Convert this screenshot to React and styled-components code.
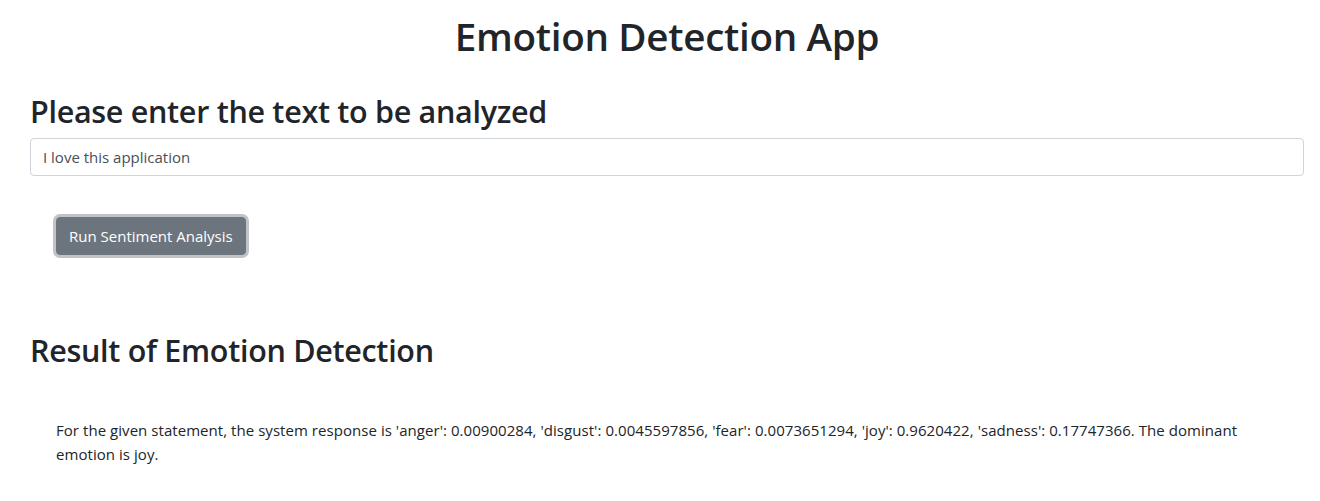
import React from "react";
import styled, { createGlobalStyle } from "styled-components";

const Global = createGlobalStyle`
  html, body { margin: 0; padding: 0; background: #fff; }
  body {
    font-family: "Open Sans", "Noto Sans", sans-serif;
    color: #212529;
    font-size: 16px;
    line-height: 1.5;
  }
  * { box-sizing: border-box; }
`;

const Page = styled.div`
  padding: 12px 16px 20px 30px;
`;

const Title = styled.h1`
  margin: 0;
  text-align: center;
  font-size: 38.6px;
  font-weight: 600;
  line-height: 48px;
  letter-spacing: -0.3px;
`;

const Heading = styled.h2`
  margin: ${(p) => p.$top}px 0 ${(p) => p.$bottom}px;
  font-size: 30.5px;
  font-weight: 600;
  line-height: 38px;
  letter-spacing: -0.3px;
`;

const TextInput = styled.input`
  display: block;
  width: 100%;
  height: 38px;
  padding: 6px 12px;
  font-family: inherit;
  font-size: 15px;
  color: #495057;
  background: #fff;
  border: 1px solid #ced4da;
  border-radius: 4px;
  outline: none;
`;

const ButtonRow = styled.div`
  display: flex;
  padding: 41px 0 0 26px;
`;

const Button = styled.button`
  height: 38px;
  padding: 0 12px;
  font-family: inherit;
  font-size: 15px;
  color: #fff;
  background: #6c757d;
  border: 1px solid #6c757d;
  border-radius: 4px;
  box-shadow: 0 0 0 3px rgba(130, 138, 145, 0.5);
  cursor: pointer;
`;

const Result = styled.p`
  margin: 49px 0 0 26px;
  font-size: 15px;
  line-height: 24px;
  letter-spacing: 0.05px;
  max-width: 1200px;
`;

export default function App() {
  return (
    <>
      <Global />
      <Page>
        <Title>Emotion Detection App</Title>
        <Heading $top={32} $bottom={8}>Please enter the text to be analyzed</Heading>
        <TextInput defaultValue="I love this application" />
        <ButtonRow>
          <Button>Run Sentiment Analysis</Button>
        </ButtonRow>
        <Heading $top={76} $bottom={0}>Result of Emotion Detection</Heading>
        <Result>
          For the given statement, the system response is 'anger': 0.00900284, 'disgust': 0.0045597856, 'fear': 0.0073651294, 'joy': 0.9620422, 'sadness': 0.17747366. The dominant emotion is joy.
        </Result>
      </Page>
    </>
  );
}
